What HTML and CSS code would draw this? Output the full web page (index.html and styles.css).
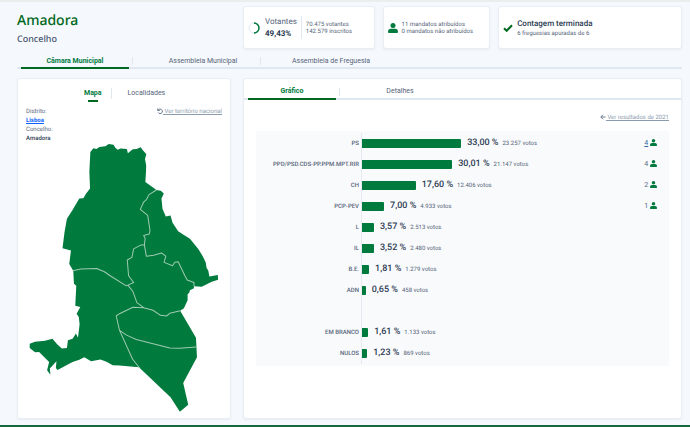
FILE: index.html
```html
<!DOCTYPE html>
<html lang="pt">
<head>
<meta charset="utf-8">
<meta name="viewport" content="width=device-width, initial-scale=1">
<title>Amadora – Concelho</title>
<link rel="stylesheet" href="styles.css">
</head>
<body>
<svg width="0" height="0" class="defs" aria-hidden="true">
  <symbol id="person" viewBox="0 0 16 16"><circle cx="8" cy="4" r="4"/><path d="M4.500 9h7c2.500 0 4.500 2 4.500 4.500v1c0 .8-.6 1.500-1.400 1.500H1.400C.6 16 0 15.300 0 14.500v-1C0 11 2 9 4.500 9z"/></symbol>
</svg>
<main class="page">
  <header class="columns header">
    <div class="heading">
      <h1>Amadora</h1>
      <p>Concelho</p>
    </div>
    <div class="cards">
      <section class="card turnout">
        <svg class="ring" viewBox="0 0 12 12" aria-hidden="true"><circle class="track" cx="6" cy="6" r="5"/><path class="value" d="M6 1a5 5 0 0 1 0 10"/></svg>
        <div class="rate"><span>Votantes</span><strong>49,43%</strong></div>
        <div class="counts"><span>70.475 votantes</span><span>142.579 inscritos</span></div>
      </section>
      <section class="card seats">
        <svg class="icon-lg" aria-hidden="true"><use href="#person"/></svg>
        <div class="counts"><span>11 mandatos atribuídos</span><span>0 mandatos não atribuídos</span></div>
      </section>
      <section class="card status">
        <svg class="icon-lg" viewBox="0 0 10 8" aria-hidden="true"><path d="M1 4.200l2.700 2.600L9 1.200" fill="none" stroke="currentColor" stroke-width="2"/></svg>
        <div class="counts"><h2>Contagem terminada</h2><span>6 freguesias apuradas de 6</span></div>
      </section>
    </div>
  </header>

  <nav class="tabs main-tabs" role="tablist">
    <button class="tab active" role="tab" aria-selected="true">Câmara Municipal</button>
    <button class="tab" role="tab">Assembleia Municipal</button>
    <button class="tab" role="tab">Assembleia de Freguesia</button>
  </nav>

  <div class="columns panels">
    <section class="card panel map-panel">
      <div class="map-tabs" role="tablist">
        <button class="map-tab active" role="tab" aria-selected="true">Mapa</button>
        <button class="map-tab" role="tab">Localidades</button>
      </div>
      <div class="place">
        <dl>
          <dt>Distrito:</dt><dd><a class="district" href="#">Lisboa</a></dd>
          <dt>Concelho:</dt><dd>Amadora</dd>
        </dl>
        <a class="link" href="#"><svg viewBox="0 0 12 12" aria-hidden="true"><path d="M1.500 1v4h4M2 5a4.500 4.500 0 1 1 .6 4.300"/></svg> Ver território nacional</a>
      </div>
      <svg class="map" viewBox="30 143 189 268" role="img" aria-label="Mapa de Amadora">
        <path class="land" d="M91 152L94 148.300 97 149 100 147 106 146.300 109.300 144 114 144.700 116 148 118.300 149.700 121 148.500 127.300 149 128.300 153.300 131 151 133.300 149.300 137 149 141 147.300 143 150 146.700 154.300 145.300 159 146.500 165 146.300 171.700 145.700 181.700 156.700 189.700 161 190.500 164 193.300 161.700 198.300 162.700 208.300 166 216 170.700 215 172.700 222.300 178.300 230.700 184 234.500 190 238.300 198.300 248.300 203 256 205.700 261.700 206.500 267 208.300 270 209.300 275.700 217.700 274.300 218 279 211.700 281 201.700 286 194 285.300 194 287.500 190 289.500 189.300 292 187.700 293.300 187.700 299.300 184 307.300 180.300 309.700 196 336.700 197 356 183.300 381.700 188.300 403.300 180 410.300 170.700 395.700 139.300 366 120 364.300 113.300 364 107 360.500 101 358.300 91.700 360 85 356 80 358.500 73.300 360.700 58.300 368.700 56.700 366.700 57.300 360 50.700 367.300 51.300 373.300 48 369 50 360.700 40 350.700 36 351 30.700 346.700 30.700 342.700 36 340.500 46 339.500 53.300 337.700 58 343 62.700 347.300 67.700 346.700 68.700 339 73.300 337.700 76.700 332.300 78.700 336.700 80.300 323.300 79.500 316 77.300 312.700 81 306 76 304.700 77 285 74.700 283 74 270 70 263.300 71.700 250 63.300 247.700 65.300 231.700 67.700 218.300 73 210 80 198.300 84 198 87 193 90.700 188.300 90 171.700z"/>
        <path class="border" d="M156.700 189.700L149.300 194.300 147 199 144 201.700 140.700 209 148 215 150.300 230 149.500 233.500 144 235 145.500 238 144.700 244.300 141 244.500 134 248.300 132.300 256.700 127.700 259.300 129 275 134 281.700 128.300 284.300 126.700 285 110.700 275 105 271 97.300 267.700 81.700 268.300 73.300 270M144.700 244.300L146.700 255.700 154 254.500 161.700 252.300 166 255.500 164.300 261.700 172.700 265 175 261.500 178.300 261 185 275 187.300 279.300 194 281.700 194 285.300M128.300 284.300L133.300 290.700 137.300 301.700 144 306.700 133.300 306.300 120 312.700 116.700 315 120 329.300 133 358 140 366.700M144 306.700L153.300 309.300 160.700 314.300 166.700 315 170 312.300 180.300 309.700M120 329.300L127 334 136.700 338.300 170 346.700 180 347 196 345.700"/>
      </svg>
    </section>

    <section class="card panel">
      <div class="tabs chart-tabs" role="tablist">
        <button class="tab active" role="tab" aria-selected="true">Gráfico</button>
        <button class="tab" role="tab">Detalhes</button>
      </div>
      <div class="chart-body">
        <a class="link" href="#"><svg viewBox="0 0 12 12" aria-hidden="true"><path d="M11 6H2M6 1.500L1.500 6 6 10.500"/></svg> Ver resultados de 2021</a>
        <table class="chart">
          <tbody>
            <tr><th scope="row">PS</th><td><div class="result"><i style="width:32.300%"></i><b>33,00 %</b><span>23.257 votos</span></div></td><td class="seat"><a href="#">4</a> <svg><use href="#person"/></svg></td></tr>
            <tr><th scope="row">PPD/PSD.CDS-PP.PPM.MPT.RIR</th><td><div class="result"><i style="width:29.400%"></i><b>30,01 %</b><span>21.147 votos</span></div></td><td class="seat">4 <svg><use href="#person"/></svg></td></tr>
            <tr><th scope="row">CH</th><td><div class="result"><i style="width:17.500%"></i><b>17,60 %</b><span>12.406 votos</span></div></td><td class="seat">2 <svg><use href="#person"/></svg></td></tr>
            <tr><th scope="row">PCP-PEV</th><td><div class="result"><i style="width:7.200%"></i><b>7,00 %</b><span>4.933 votos</span></div></td><td class="seat">1 <svg><use href="#person"/></svg></td></tr>
            <tr><th scope="row">L</th><td><div class="result"><i style="width:3.900%"></i><b>3,57 %</b><span>2.513 votos</span></div></td><td></td></tr>
            <tr><th scope="row">IL</th><td><div class="result"><i style="width:3.900%"></i><b>3,52 %</b><span>2.480 votos</span></div></td><td></td></tr>
            <tr><th scope="row">B.E.</th><td><div class="result"><i style="width:2.300%"></i><b>1,81 %</b><span>1.279 votos</span></div></td><td></td></tr>
            <tr><th scope="row">ADN</th><td><div class="result"><i style="width:1.200%"></i><b>0,65 %</b><span>458 votos</span></div></td><td></td></tr>
          </tbody>
          <tbody>
            <tr class="spacer"><th></th><td></td><td></td></tr>
            <tr><th scope="row">EM BRANCO</th><td><div class="result"><i style="width:2%"></i><b>1,61 %</b><span>1.133 votos</span></div></td><td></td></tr>
            <tr><th scope="row">NULOS</th><td><div class="result"><i style="width:1.700%"></i><b>1,23 %</b><span>869 votos</span></div></td><td></td></tr>
          </tbody>
        </table>
      </div>
    </section>
  </div>
</main>
<footer class="footer"></footer>
</body>
</html>
```
FILE: styles.css
```css
:root {
  --green: #007a3d;
  --dark-green: #006820;
  --ink: #2c3b52;
  --muted: #56657a;
  --line: #dfe7f0;
}
* { box-sizing: border-box; }
body {
  margin: 0;
  min-height: 100vh;
  display: flex;
  flex-direction: column;
  border-top: 2px solid #eaeeed;
  background: #f5f8fc;
  color: var(--muted);
  font: 7px/9px Roboto, "Liberation Sans", sans-serif;
  text-rendering: geometricPrecision;
}
h1, h2, p, dl, dd { margin: 0; }
button { border: 0; padding: 0; background: none; color: inherit; font: inherit; cursor: pointer; }
.defs { position: absolute; }

.page { flex: 1; display: flex; flex-direction: column; padding: 4px 8px 6px 17px; }
.columns { display: grid; grid-template-columns: 214fr 439fr; gap: 12px; }
.card {
  border: 1px solid #e9eff5;
  border-radius: 3px;
  background: #fff;
  box-shadow: 0 1px 2px #e6ecf4;
}

.heading { padding-top: 6px; }
.heading h1 { color: var(--dark-green); font: 500 14px/18px "Noto Sans", sans-serif; }
.heading p { color: #465670; font: 500 9px/18px "Noto Sans", sans-serif; }
.cards { display: grid; grid-template-columns: 131fr 107fr 183fr; gap: 8px; }
.cards .card { display: flex; align-items: center; height: 43px; padding: 0 4px; gap: 4px; }
.ring { width: 12px; height: 12px; margin-right: 1px; fill: none; stroke-width: 1.500; }
.track { stroke: #dfe7ee; stroke-width: 1; }
.value { stroke: var(--green); }
.rate { display: flex; flex-direction: column; gap: 1px; padding-right: 4px; border-right: 1px solid var(--line); font-size: 8px; line-height: 11px; }
.rate strong { color: var(--ink); font-weight: 700; }
.counts { display: flex; flex-direction: column; line-height: 7px; font-size: 6px; white-space: nowrap; }
.counts h2 { margin-bottom: 1px; color: var(--ink); font-size: 8px; font-weight: 500; line-height: 10px; }
.icon-lg { width: 10px; height: 10px; color: var(--dark-green); fill: var(--green); }

.tabs { display: flex; gap: 12px; border-bottom: 2px solid var(--line); }
.tab { position: relative; }
.tab:not(:last-child)::before {
  content: "";
  position: absolute;
  top: 4px;
  right: 0;
  width: 1px;
  height: 8px;
  background: var(--line);
}
.tab.active { color: var(--green); font-weight: 700; }
.tab.active::after {
  content: "";
  position: absolute;
  bottom: -2px;
  left: 4px;
  right: 4px;
  height: 2px;
  background: var(--dark-green);
}
.main-tabs { margin: 4px 0 9px; }
.main-tabs .tab { width: 116px; height: 14px; padding-top: 2px; }

.panels { flex: 1; }
.map-panel { padding: 9px 8px 5px; }
.map-tabs { display: flex; padding-left: 58px; line-height: 11px; }
.map-tab { position: relative; }
.map-tab.active { margin-right: 16px; padding: 0 9px 0 0; border-right: 1px solid var(--line); color: var(--green); font-weight: 700; }
.map-tab.active::after {
  content: "";
  position: absolute;
  top: 12px;
  left: 4px;
  width: 10px;
  height: 2px;
  background: var(--dark-green);
}
.place { display: flex; justify-content: space-between; padding-top: 8px; font-size: 6px; }
.place dd { color: var(--ink); font-weight: 500; }
.place .district { color: #0d5fff; font-weight: 700; }
.link { color: #8b9caf; font-size: 6px; }
.link svg { width: 6px; height: 6px; fill: none; stroke: #687a8f; stroke-width: 2; vertical-align: -1px; }
.map { display: block; width: 97%; margin: 0 auto; }
.land { fill: var(--green); }
.border { fill: none; stroke: #9fcbb2; stroke-width: 1; stroke-linejoin: round; }

.chart-tabs .tab { width: 96px; height: 19px; padding-top: 6px; }
.chart-tabs .tab:not(:last-child)::before { top: 9px; }
.chart-body { padding: 13px 12px 0; text-align: right; }
.chart-body > .link { display: block; }
.chart { width: 100%; margin-top: 9px; padding: 2px 0; border-spacing: 0; background: #f9fafc; table-layout: fixed; text-align: left; }
.chart tr { height: 21px; }
.chart th, .chart td { padding: 0; }
.chart th { width: 106px; padding-right: 2px; border-right: 1px solid #e6eaf0; font-size: 6px; font-weight: 500; text-align: right; white-space: nowrap; }
.chart .seat { text-align: right; padding-right: 12px; }
.chart td:last-child { width: 40px; }
.seat svg { width: 7px; height: 7px; fill: var(--green); vertical-align: -1px; }
.seat a { color: #33669a; }
.result { display: flex; align-items: center; margin-right: -40px; white-space: nowrap; }
.result i { height: 9px; border-radius: 0 1px 1px 0; background: var(--green); }
.result b { margin: 0 4px 0 6px; color: var(--ink); font-size: 9px; font-weight: 500; }
.result span { font-size: 6px; }

.footer { height: 2px; background: #17683c; }
```
